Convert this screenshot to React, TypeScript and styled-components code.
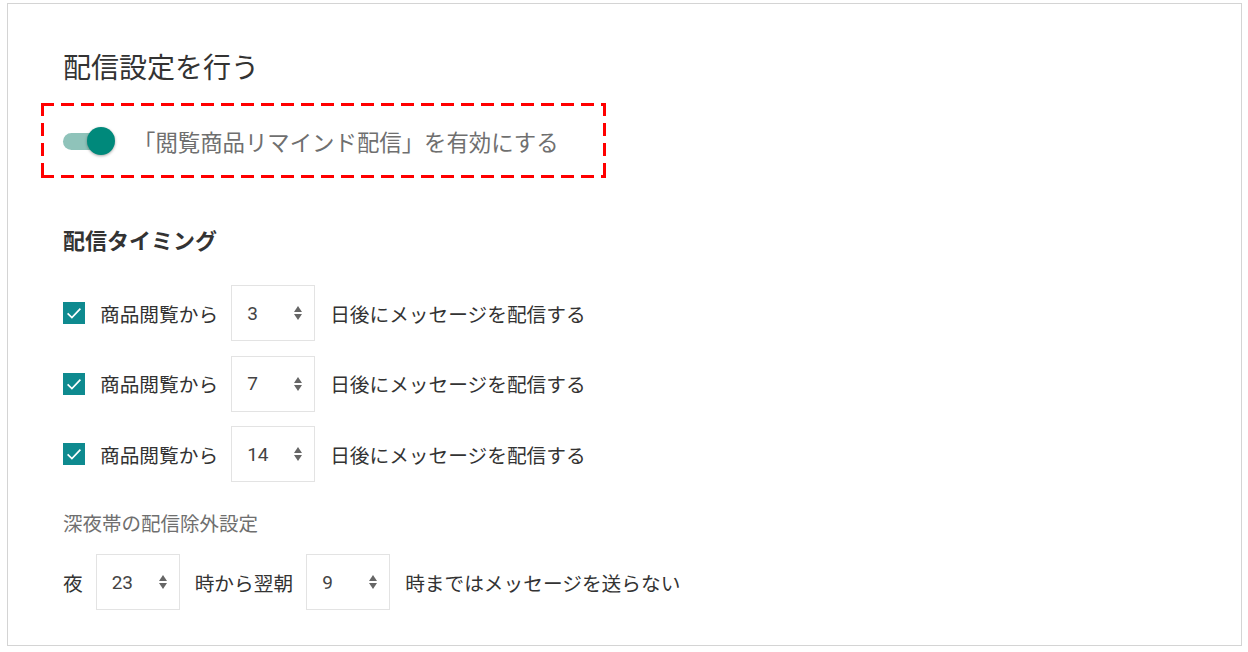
import React, { useState } from "react";
import styled, { createGlobalStyle } from "styled-components";

const GlobalStyle = createGlobalStyle`
  html, body {
    margin: 0;
    padding: 0;
    background: #ffffff;
  }
  body {
    font-family: "Noto Sans CJK JP", "Noto Sans", sans-serif;
    color: #333333;
  }
`;

const Page = styled.div`
  width: 1248px;
  height: 652px;
  padding: 3px 0 0 7px;
  box-sizing: border-box;
`;

const Card = styled.div`
  width: 1235px;
  height: 643px;
  box-sizing: border-box;
  border: 1px solid #d4d4d4;
  padding: 42px 55px 0;
  display: flex;
  flex-direction: column;
`;

const Title = styled.h1`
  margin: 0;
  font-size: 28px;
  font-weight: 400;
  line-height: 40px;
  color: #333333;
`;

const Highlight = styled.div`
  width: 565px;
  height: 75px;
  box-sizing: border-box;
  margin: 17px 0 0 -22px;
  padding-left: 22px;
  display: flex;
  align-items: center;
  gap: 18px;
  background:
    repeating-linear-gradient(to right, #ff0000 0 13px, transparent 13px 20px) top left / 100% 3px no-repeat,
    repeating-linear-gradient(to right, #ff0000 0 13px, transparent 13px 20px) bottom left / 100% 3px no-repeat,
    repeating-linear-gradient(to bottom, #ff0000 0 13px, transparent 13px 20px) top left / 3px 100% no-repeat,
    repeating-linear-gradient(to bottom, #ff0000 0 13px, transparent 13px 20px) top right / 3px 100% no-repeat;
`;

const Switch = styled.button<{ on: boolean }>`
  position: relative;
  width: 52px;
  height: 28px;
  padding: 0;
  border: none;
  background: transparent;
  cursor: pointer;
  flex-shrink: 0;

  &::before {
    content: "";
    position: absolute;
    left: 0;
    top: 6px;
    width: 46px;
    height: 17px;
    border-radius: 9px;
    background: ${(p) => (p.on ? "#8fc3ba" : "#c8c8c8")};
  }

  &::after {
    content: "";
    position: absolute;
    top: 0;
    left: ${(p) => (p.on ? "24px" : "0")};
    width: 28px;
    height: 28px;
    border-radius: 50%;
    background: ${(p) => (p.on ? "#00897b" : "#f5f5f5")};
    box-shadow: 0 1px 3px rgba(0, 0, 0, 0.35);
  }
`;

const SwitchLabel = styled.span`
  font-size: 22.4px;
  color: #6f6f6f;
  white-space: nowrap;
`;

const SectionTitle = styled.h2`
  margin: 46px 0 0;
  font-size: 22px;
  font-weight: 700;
  line-height: 30px;
  color: #333333;
`;

const Rows = styled.div`
  display: flex;
  flex-direction: column;
  gap: 14.5px;
  margin-top: 31px;
`;

const Row = styled.div`
  display: flex;
  align-items: center;
  height: 56px;
`;

const CheckBox = styled.span<{ checked: boolean }>`
  width: 22px;
  height: 22px;
  box-sizing: border-box;
  background: ${(p) => (p.checked ? "#0e8a8f" : "#ffffff")};
  border: ${(p) => (p.checked ? "none" : "2px solid #888")};
  display: flex;
  align-items: center;
  justify-content: center;
  margin-right: 15px;
  cursor: pointer;
`;

const RowText = styled.span<{ gap?: number }>`
  font-size: 19.7px;
  color: #333333;
  margin-right: ${(p) => p.gap ?? 0}px;
  white-space: nowrap;
`;

const SelectBox = styled.div`
  width: 84px;
  height: 56px;
  box-sizing: border-box;
  border: 1px solid #e3e3e3;
  display: flex;
  align-items: center;
  justify-content: space-between;
  padding: 0 12px 0 15px;
  margin-right: 15px;
  font-family: Roboto, "Noto Sans", sans-serif;
  font-size: 19px;
  color: #444444;
`;

const Arrows = styled.span`
  display: flex;
  flex-direction: column;
  align-items: center;
  gap: 2px;

  &::before,
  &::after {
    content: "";
    width: 0;
    height: 0;
    border-left: 4px solid transparent;
    border-right: 4px solid transparent;
  }
  &::before {
    border-bottom: 6px solid #666666;
  }
  &::after {
    border-top: 6px solid #666666;
  }
`;

const SubTitle = styled.div`
  margin-top: 27px;
  font-size: 19.5px;
  line-height: 28px;
  color: #6f6f6f;
`;

const NightRow = styled(Row)`
  margin-top: 17px;
`;

function CheckIcon() {
  return (
    <svg width="18" height="18" viewBox="0 0 18 18">
      <path d="M2.6 9.4 L6.9 13.6 L15.4 4.6" fill="none" stroke="#ffffff" strokeWidth="1.7" />
    </svg>
  );
}

function NumberSelect({ value }: { value: string }) {
  return (
    <SelectBox>
      <span>{value}</span>
      <Arrows />
    </SelectBox>
  );
}

function App() {
  const [enabled, setEnabled] = useState(true);
  const [timings, setTimings] = useState([
    { days: "3", checked: true },
    { days: "7", checked: true },
    { days: "14", checked: true },
  ]);

  return (
    <Page>
      <GlobalStyle />
      <Card>
        <Title>配信設定を行う</Title>
        <Highlight>
          <Switch on={enabled} onClick={() => setEnabled(!enabled)} />
          <SwitchLabel>「閲覧商品リマインド配信」を有効にする</SwitchLabel>
        </Highlight>

        <SectionTitle>配信タイミング</SectionTitle>
        <Rows>
          {timings.map((t, i) => (
            <Row key={i}>
              <CheckBox
                checked={t.checked}
                onClick={() =>
                  setTimings(timings.map((x, j) => (j === i ? { ...x, checked: !x.checked } : x)))
                }
              >
                {t.checked && <CheckIcon />}
              </CheckBox>
              <RowText gap={13}>商品閲覧から</RowText>
              <NumberSelect value={t.days} />
              <RowText>日後にメッセージを配信する</RowText>
            </Row>
          ))}
        </Rows>

        <SubTitle>深夜帯の配信除外設定</SubTitle>
        <NightRow>
          <RowText gap={13}>夜</RowText>
          <NumberSelect value="23" />
          <RowText gap={13}>時から翌朝</RowText>
          <NumberSelect value="9" />
          <RowText>時まではメッセージを送らない</RowText>
        </NightRow>
      </Card>
    </Page>
  );
}

export default App;
